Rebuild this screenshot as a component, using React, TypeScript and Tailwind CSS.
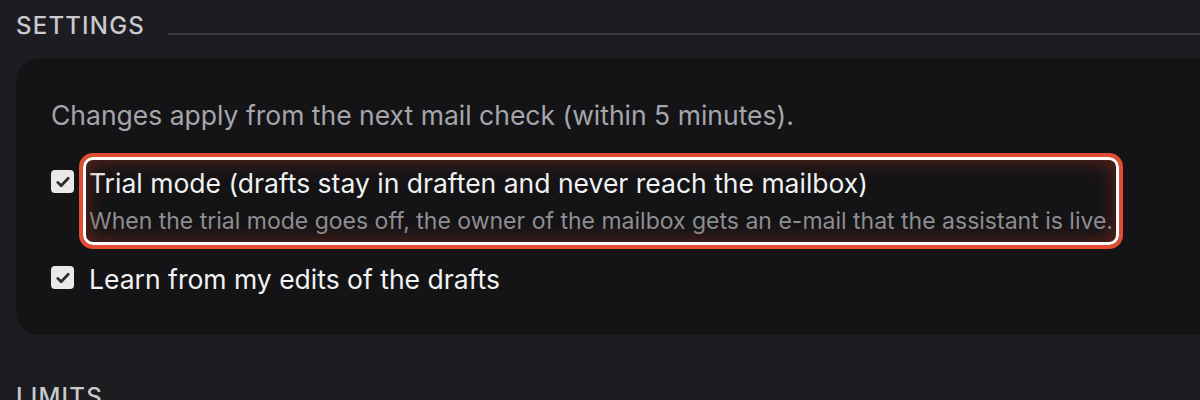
import React from "react";

const CheckBox = () => (
  <span className="mt-[3px] flex h-[23px] w-[23px] shrink-0 items-center justify-center rounded-[4px] bg-[#e9e9ea]">
    <svg viewBox="0 0 24 24" className="h-[18px] w-[18px]">
      <path d="M5 12.5 L9.5 17 L19 7" fill="none" stroke="#2a2a2c" strokeWidth="3.6" strokeLinecap="round" strokeLinejoin="round" />
    </svg>
  </span>
);

export default function App() {
  return (
    <div
      className="h-[400px] w-[1200px] overflow-hidden bg-[#1d1d21] pl-4"
      style={{ fontFamily: "Inter, 'Noto Sans', sans-serif" }}
    >
      {/* section heading */}
      <div className="flex items-center gap-[23px] pt-[12px]">
        <h2 className="text-[24px] leading-[28px] font-medium tracking-[0.05em] text-[#c9c9cd]">SETTINGS</h2>
        <div className="h-[2px] flex-1 translate-y-[8px] bg-[#38383d]" />
      </div>

      <div className="mt-[18px] w-[1240px] rounded-[24px] bg-[#141417] pb-[40px] pl-[35px] pt-[39px]">
        <p className="text-[26.5px] leading-[36px] text-[#a5a5aa]">
          Changes apply from the next mail check (within 5 minutes).
        </p>

        <label className="mt-[34px] flex items-start gap-[15px]">
          <CheckBox />
          <div className="relative">
            <div className="text-[26.5px] leading-[32px] text-[#f2f2f3]">
              Trial mode (drafts stay in draften and never reach the mailbox)
            </div>
            <div className="mt-[8px] text-[23px] leading-[28px] text-[#8f8f92]">
              When the trial mode goes off, the owner of the mailbox gets an e-mail that the assistant is live.
            </div>
            {/* highlight annotation */}
            <div className="pointer-events-none absolute -bottom-[14px] -left-[10px] -right-[10px] -top-[14px] rounded-[14px] border-[4px] border-[#e24c31]">
              <div className="h-full w-full rounded-[10px] border-[3px] border-white shadow-[inset_0_0_20px_rgba(160,50,30,0.6)]" />
            </div>
          </div>
        </label>

        <label className="mt-[28px] flex items-start gap-[15px]">
          <CheckBox />
          <div className="text-[26.5px] leading-[32px] text-[#f2f2f3]">Learn from my edits of the drafts</div>
        </label>
      </div>

      <h2 className="mt-[48px] text-[24px] leading-[28px] font-medium tracking-[0.05em] text-[#c9c9cd]">LIMITS</h2>
    </div>
  );
}
